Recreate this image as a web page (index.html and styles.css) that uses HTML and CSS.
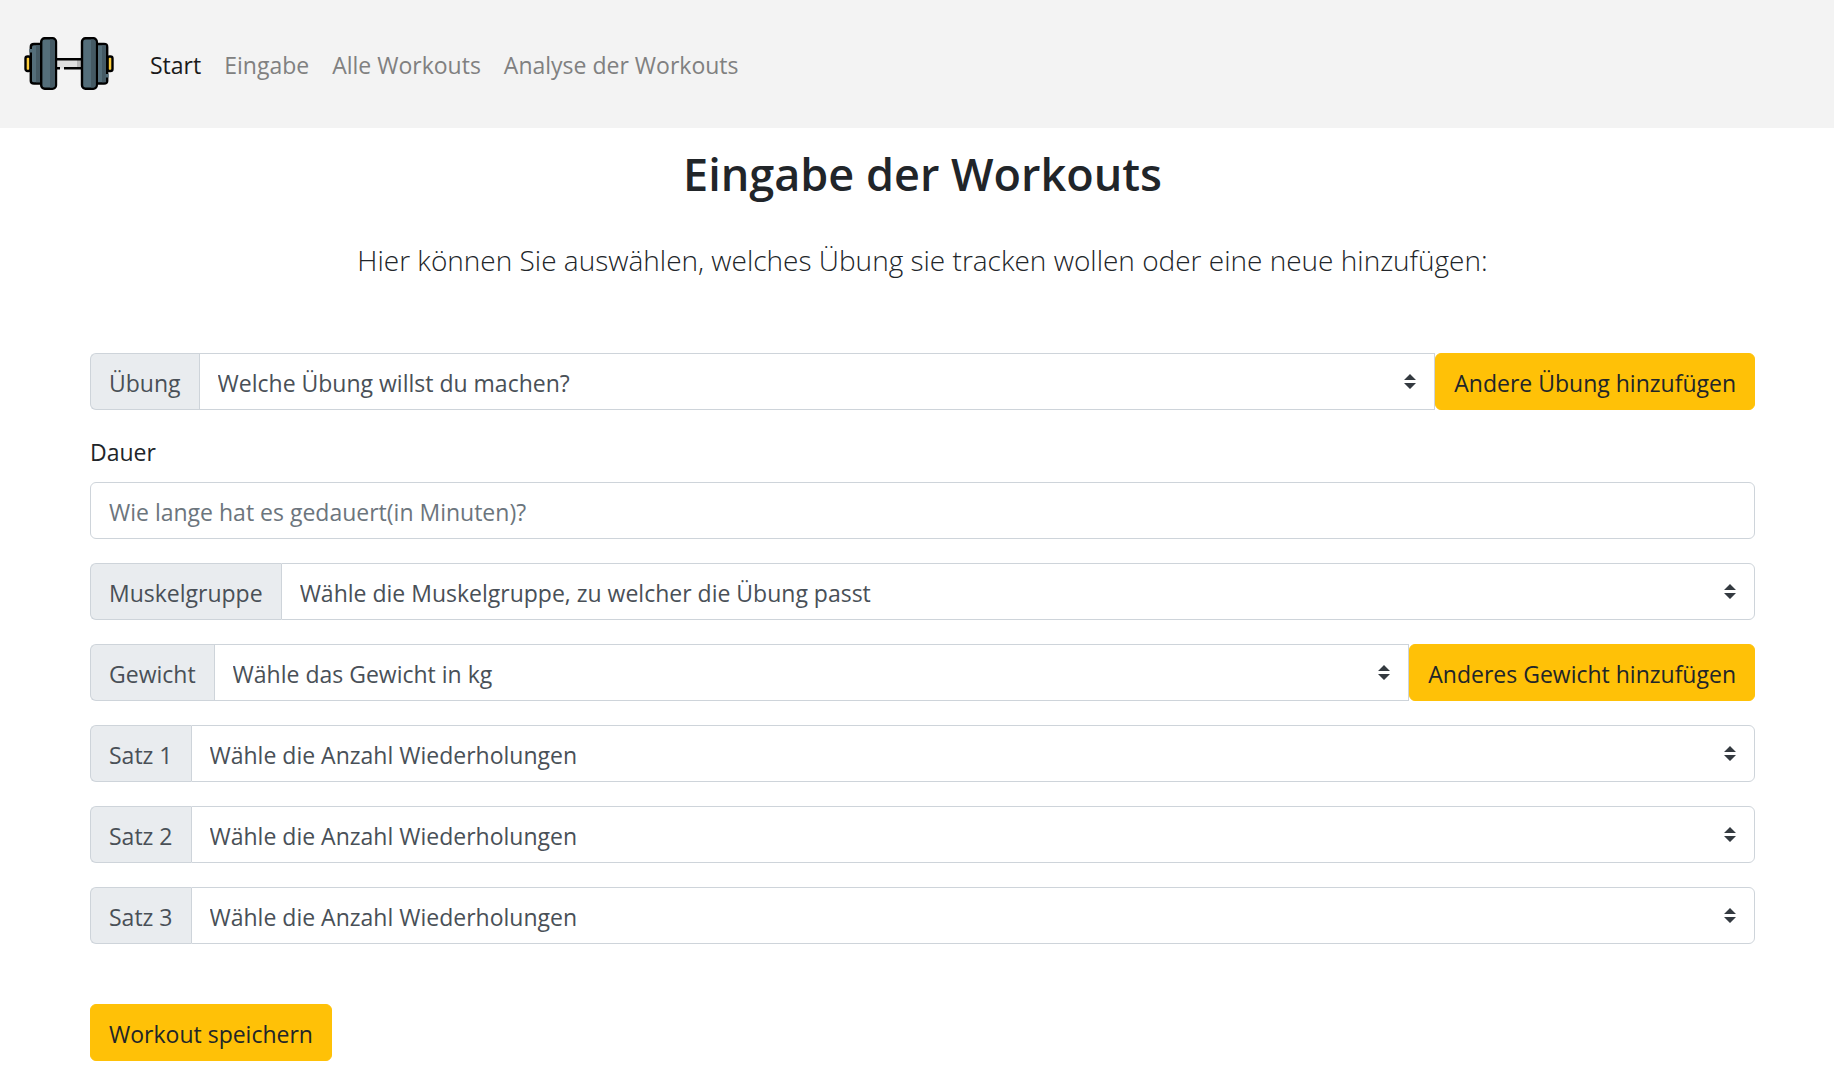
FILE: index.html
```
<!DOCTYPE html>
<html lang="de">
<head>
<meta charset="utf-8">
<meta name="viewport" content="width=device-width, initial-scale=1">
<title>Eingabe der Workouts</title>
<link rel="stylesheet" href="styles.css">
</head>
<body>
<nav class="navbar">
  <a class="navbar-brand" href="#" aria-label="Startseite">
    <svg class="logo" viewBox="0 0 90 90" aria-hidden="true">
      <rect x="32" y="40.500" width="26" height="9" fill="#dedede"/>
      <rect x="53" y="40.500" width="5" height="9" fill="#b8b8b8"/>
      <path d="M32 40.300H58M32 49.300H36M40 49.300H58" fill="none" stroke="#000" stroke-width="2.400"/>
      <g stroke="#000" stroke-width="2.400" stroke-linejoin="round">
        <rect x="1.500" y="37.500" width="5" height="14.500" rx="2" fill="#ffcf3d"/>
        <rect x="83.500" y="37.500" width="5" height="14.500" rx="2" fill="#ffcf3d"/>
        <path d="M18 25H10Q6.800 25 6.800 28V62Q6.800 64.500 10 64.500H18Z" fill="#546e7a"/>
        <path d="M72 25H80Q83.200 25 83.200 28V62Q83.200 64.500 80 64.500H72Z" fill="#546e7a"/>
      </g>
      <path d="M12 26.200H16V63.300H12ZM78 26.200H82V63.300H78Z" fill="#455a64"/>
      <path d="M6.800 30V33.500M83.200 55V58.500" stroke="#546e7a" stroke-width="3"/>
      <g fill="#546e7a" stroke="#000" stroke-width="2.400">
        <rect x="17.200" y="19.200" width="14.800" height="50.600" rx="3.500"/>
        <rect x="58" y="19.200" width="14.800" height="50.600" rx="3.500"/>
      </g>
      <path d="M26 20.400H28.500Q30.800 20.400 30.800 23V66Q30.800 68.600 28.500 68.600H26ZM67 20.400H69.500Q71.600 20.400 71.600 23V66Q71.600 68.600 69.500 68.600H67Z" fill="#455a64"/>
    </svg>
  </a>
  <ul class="navbar-nav">
    <li><a class="nav-link nav-link-active" href="#" aria-current="page">Start</a></li>
    <li><a class="nav-link" href="#">Eingabe</a></li>
    <li><a class="nav-link" href="#">Alle Workouts</a></li>
    <li><a class="nav-link" href="#">Analyse der Workouts</a></li>
  </ul>
</nav>
<main class="container">
  <h1 class="title">Eingabe der Workouts</h1>
  <p class="lead">Hier können Sie auswählen, welches Übung sie tracken wollen oder eine neue hinzufügen:</p>
  <form class="workout-form">
    <div class="input-group">
      <label class="group-label" for="uebung">Übung</label>
      <select class="select select-joined" id="uebung"><option>Welche Übung willst du machen?</option></select>
      <button class="btn" type="button">Andere Übung hinzufügen</button>
    </div>
    <div class="form-group">
      <label class="form-label" for="dauer">Dauer</label>
      <input class="text-input" id="dauer" type="text" placeholder="Wie lange hat es gedauert(in Minuten)?">
    </div>
    <div class="input-group">
      <label class="group-label" for="muskelgruppe">Muskelgruppe</label>
      <select class="select" id="muskelgruppe"><option>Wähle die Muskelgruppe, zu welcher die Übung passt</option></select>
    </div>
    <div class="input-group">
      <label class="group-label" for="gewicht">Gewicht</label>
      <select class="select select-joined" id="gewicht"><option>Wähle das Gewicht in kg</option></select>
      <button class="btn" type="button">Anderes Gewicht hinzufügen</button>
    </div>
    <div class="input-group">
      <label class="group-label" for="satz1">Satz 1</label>
      <select class="select" id="satz1"><option>Wähle die Anzahl Wiederholungen</option></select>
    </div>
    <div class="input-group">
      <label class="group-label" for="satz2">Satz 2</label>
      <select class="select" id="satz2"><option>Wähle die Anzahl Wiederholungen</option></select>
    </div>
    <div class="input-group">
      <label class="group-label" for="satz3">Satz 3</label>
      <select class="select" id="satz3"><option>Wähle die Anzahl Wiederholungen</option></select>
    </div>
    <button class="btn btn-submit" type="submit">Workout speichern</button>
  </form>
</main>
</body>
</html>
```
FILE: styles.css
```
*, *::before, *::after { box-sizing: border-box; }

body {
  margin: 0;
  background: #fff;
  color: #212529;
  font-family: "Open Sans", "Noto Sans", sans-serif;
  font-size: 23px;
  line-height: 36px;
}

.navbar {
  display: flex;
  align-items: center;
  gap: 36px;
  padding: 19px 24px;
  background: #f3f3f3;
}

.navbar-brand, .logo { display: block; }
.logo { width: 90px; height: 90px; }

.navbar-nav {
  display: flex;
  gap: 23px;
  margin: 0;
  padding: 2px 0 0;
  list-style: none;
}

.nav-link { color: #808080; text-decoration: none; }
.nav-link-active { color: #1a1a1a; }

.container { padding: 18px 79px 18px 90px; }

.title {
  margin: 0 0 34px;
  font-size: 45px;
  font-weight: 600;
  line-height: 56px;
  text-align: center;
}

.lead {
  margin: 0 0 69px;
  font-size: 28px;
  font-weight: 300;
  line-height: 48px;
  text-align: center;
}

.workout-form {
  display: flex;
  flex-direction: column;
  gap: 24px;
}

.input-group { display: flex; }

.group-label, .select, .text-input, .btn {
  height: 57px;
  padding: 11px 18px 8px;
  border: 1px solid #ced4da;
  border-radius: 6px;
  font: inherit;
}

.group-label {
  border-right: 0;
  border-radius: 6px 0 0 6px;
  background: #e9ecef;
  color: #495057;
  white-space: nowrap;
}

.select {
  flex: 1;
  min-width: 0;
  padding-right: 42px;
  border-radius: 0 6px 6px 0;
  appearance: none;
  background: #fff url("data:image/svg+xml,%3Csvg xmlns='http://www.w3.org/2000/svg' viewBox='0 0 4 5'%3E%3Cpath fill='%23343a40' d='M2 0L0 2h4zm0 5L0 3h4z'/%3E%3C/svg%3E") no-repeat right 18px center / 12px 15px;
  color: #495057;
}

.select-joined { border-radius: 0; }

.form-group { display: flex; flex-direction: column; gap: 12px; }

.text-input { width: 100%; background: #fff; color: #495057; }
.text-input::placeholder { color: #6c757d; opacity: 1; }

.btn {
  border-color: #ffc107;
  background: #ffc107;
  color: #212529;
  white-space: nowrap;
  cursor: pointer;
}

.btn-submit { align-self: flex-start; margin-top: 36px; }
```
